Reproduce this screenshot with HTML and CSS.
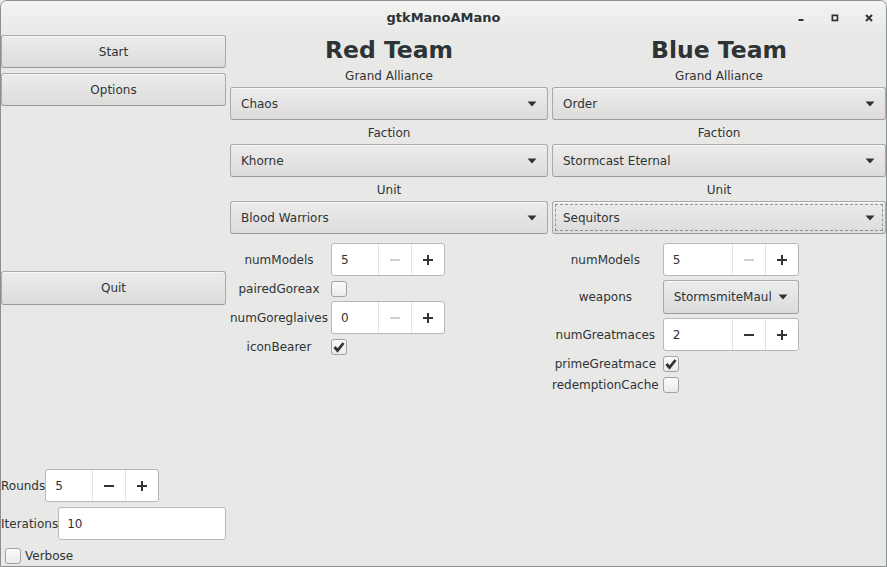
FILE: index.html
```html
<!DOCTYPE html>
<html>
<head>
<meta charset="utf-8">
<link rel="stylesheet" href="styles.css">
</head>
<body>
<div class="window">
  <header class="titlebar">
    <div></div>
    <span class="title">gtkManoAMano</span>
    <div class="controls">
      <span class="ctl"><svg width="8" height="8" viewBox="0 0 8 8"><rect x="1.5" y="5" width="5" height="2" fill="#2e3436"/></svg></span>
      <span class="ctl"><svg width="8" height="8" viewBox="0 0 8 8"><rect x="1" y="1" width="6" height="6" fill="none" stroke="#2e3436" stroke-width="2" transform="translate(0.5 0.5) scale(0.85)"/></svg></span>
      <span class="ctl"><svg width="8" height="8" viewBox="0 0 8 8"><path d="M1 1L7 7M7 1L1 7" stroke="#2e3436" stroke-width="2"/></svg></span>
    </div>
  </header>
  <main class="content">
    <aside class="sidebar">
      <button class="btn">Start</button>
      <button class="btn gap">Options</button>
      <div class="spacer"></div>
      <button class="btn quit">Quit</button>
      <div class="spacer"></div>
      <div class="inline-row">
        <span>Rounds</span>
        <div class="spin">
          <span class="spin-entry">5</span>
          <span class="spin-btn"><svg width="12" height="12" viewBox="0 0 12 12"><path d="M1 6H11" stroke="#2e3436" stroke-width="2"/></svg></span>
          <span class="spin-btn"><svg width="12" height="12" viewBox="0 0 12 12"><path d="M1 6H11M6 1V11" stroke="#2e3436" stroke-width="2"/></svg></span>
        </div>
      </div>
      <div class="inline-row gap">
        <span>Iterations</span>
        <div class="entry">10</div>
      </div>
      <label class="check-row">
        <span class="check"></span><span>Verbose</span>
      </label>
    </aside>

    <section class="team">
      <h1 class="team-title">Red Team</h1>
      <div class="field-label">Grand Alliance</div>
      <div class="combo"><span>Chaos</span><svg class="arrow" width="10" height="6" viewBox="0 0 10 6"><path d="M0.5 0.5H9.5L5 5.5Z" fill="#2e3436"/></svg></div>
      <div class="field-label">Faction</div>
      <div class="combo"><span>Khorne</span><svg class="arrow" width="10" height="6" viewBox="0 0 10 6"><path d="M0.5 0.5H9.5L5 5.5Z" fill="#2e3436"/></svg></div>
      <div class="field-label">Unit</div>
      <div class="combo"><span>Blood Warriors</span><svg class="arrow" width="10" height="6" viewBox="0 0 10 6"><path d="M0.5 0.5H9.5L5 5.5Z" fill="#2e3436"/></svg></div>

      <div class="params">
        <span class="plabel">numModels</span>
        <div class="spin">
          <span class="spin-entry">5</span>
          <span class="spin-btn"><svg width="12" height="12" viewBox="0 0 12 12"><path d="M1 6H11" stroke="#cfd1d1" stroke-width="2"/></svg></span>
          <span class="spin-btn"><svg width="12" height="12" viewBox="0 0 12 12"><path d="M1 6H11M6 1V11" stroke="#2e3436" stroke-width="2"/></svg></span>
        </div>
        <span class="plabel">pairedGoreax</span>
        <span class="check"></span>
        <span class="plabel">numGoreglaives</span>
        <div class="spin">
          <span class="spin-entry">0</span>
          <span class="spin-btn"><svg width="12" height="12" viewBox="0 0 12 12"><path d="M1 6H11" stroke="#cfd1d1" stroke-width="2"/></svg></span>
          <span class="spin-btn"><svg width="12" height="12" viewBox="0 0 12 12"><path d="M1 6H11M6 1V11" stroke="#2e3436" stroke-width="2"/></svg></span>
        </div>
        <span class="plabel">iconBearer</span>
        <span class="check"><svg width="14" height="14" viewBox="0 0 14 14"><path d="M2.5 7L5.5 10.5L11.5 3" fill="none" stroke="#2e3436" stroke-width="2.8"/></svg></span>
      </div>
    </section>

    <section class="team">
      <h1 class="team-title">Blue Team</h1>
      <div class="field-label">Grand Alliance</div>
      <div class="combo"><span>Order</span><svg class="arrow" width="10" height="6" viewBox="0 0 10 6"><path d="M0.5 0.5H9.5L5 5.5Z" fill="#2e3436"/></svg></div>
      <div class="field-label">Faction</div>
      <div class="combo"><span>Stormcast Eternal</span><svg class="arrow" width="10" height="6" viewBox="0 0 10 6"><path d="M0.5 0.5H9.5L5 5.5Z" fill="#2e3436"/></svg></div>
      <div class="field-label">Unit</div>
      <div class="combo focused"><span>Sequitors</span><svg class="arrow" width="10" height="6" viewBox="0 0 10 6"><path d="M0.5 0.5H9.5L5 5.5Z" fill="#2e3436"/></svg></div>

      <div class="params wide">
        <span class="plabel">numModels</span>
        <div class="spin">
          <span class="spin-entry">5</span>
          <span class="spin-btn"><svg width="12" height="12" viewBox="0 0 12 12"><path d="M1 6H11" stroke="#cfd1d1" stroke-width="2"/></svg></span>
          <span class="spin-btn"><svg width="12" height="12" viewBox="0 0 12 12"><path d="M1 6H11M6 1V11" stroke="#2e3436" stroke-width="2"/></svg></span>
        </div>
        <span class="plabel">weapons</span>
        <div class="combo small"><span>StormsmiteMaul</span><svg class="arrow" width="10" height="6" viewBox="0 0 10 6"><path d="M0.5 0.5H9.5L5 5.5Z" fill="#2e3436"/></svg></div>
        <span class="plabel">numGreatmaces</span>
        <div class="spin">
          <span class="spin-entry">2</span>
          <span class="spin-btn"><svg width="12" height="12" viewBox="0 0 12 12"><path d="M1 6H11" stroke="#2e3436" stroke-width="2"/></svg></span>
          <span class="spin-btn"><svg width="12" height="12" viewBox="0 0 12 12"><path d="M1 6H11M6 1V11" stroke="#2e3436" stroke-width="2"/></svg></span>
        </div>
        <span class="plabel">primeGreatmace</span>
        <span class="check"><svg width="14" height="14" viewBox="0 0 14 14"><path d="M2.5 7L5.5 10.5L11.5 3" fill="none" stroke="#2e3436" stroke-width="2.8"/></svg></span>
        <span class="plabel">redemptionCache</span>
        <span class="check"></span>
      </div>
    </section>
  </main>
</div>
</body>
</html>
```
FILE: styles.css
```css
* { box-sizing: border-box; }

body {
  margin: 0;
  font-family: "DejaVu Sans", sans-serif;
  font-size: 12px;
  color: #2e3436;
  background: #e8e8e7;
}

.window {
  width: 887px;
  height: 567px;
  border: 1px solid #8c8f90;
  border-radius: 7px 7px 0 0;
  overflow: hidden;
  background: #e8e8e7;
  display: flex;
  flex-direction: column;
}

.titlebar {
  height: 33px;
  flex: none;
  display: grid;
  grid-template-columns: 1fr auto 1fr;
  align-items: center;
  background: linear-gradient(to bottom, #f3f3f2, #e9e9e8);
}

.title {
  font-weight: bold;
  font-size: 13px;
  color: #2e3436;
}

.controls {
  display: flex;
  justify-content: flex-end;
}

.ctl {
  width: 34px;
  height: 33px;
  display: flex;
  align-items: center;
  justify-content: center;
}

.content {
  flex: 1;
  display: grid;
  grid-template-columns: 225px 318px 1fr;
  column-gap: 4px;
  padding-top: 1px;
  min-height: 0;
}

.sidebar {
  display: flex;
  flex-direction: column;
  padding-bottom: 1px;
}

.spacer { flex: 1; }

.gap { margin-top: 5px; }

.btn, .combo {
  font: inherit;
  color: #2e3436;
  height: 33px;
  flex: none;
  border: 1px solid #a9a9a7;
  border-bottom-color: #9a9a98;
  border-radius: 3px;
  background: linear-gradient(to bottom, #edecec, #dddcdb);
  box-shadow: inset 0 1px rgba(255,255,255,0.7);
  padding: 0;
}

.btn.quit { height: 34px; }

.inline-row {
  display: flex;
  align-items: center;
  height: 33px;
}

.entry {
  flex: 1;
  height: 33px;
  background: #fff;
  border: 1px solid #b8b9b6;
  border-radius: 3px;
  display: flex;
  align-items: center;
  padding-left: 8px;
}

.check-row {
  display: flex;
  align-items: center;
  gap: 4px;
  height: 18px;
  padding-left: 4px;
  margin-top: 7px;
}

.check {
  width: 16px;
  height: 16px;
  border: 1px solid #a2a3a1;
  border-radius: 3px;
  background: linear-gradient(to bottom, #fbfbfb, #ebebea);
  display: flex;
  align-items: center;
  justify-content: center;
  justify-self: start;
  align-self: center;
}

.spin {
  display: flex;
  height: 33px;
  min-width: 113px;
  background: #fff;
  border: 1px solid #b8b9b6;
  border-radius: 3px;
  flex: none;
}

.spin-entry {
  flex: 1;
  display: flex;
  align-items: center;
  padding-left: 9px;
  min-width: 46px;
}

.spin-btn {
  width: 33px;
  border-left: 1px solid #e3e3e2;
  display: flex;
  align-items: center;
  justify-content: center;
}

.team {
  display: flex;
  flex-direction: column;
  min-width: 0;
}

.team-title {
  margin: 0;
  height: 28px;
  padding-top: 1px;
  font-size: 23.5px;
  font-weight: bold;
  text-align: center;
  line-height: 28px;
}

.field-label {
  height: 24px;
  padding-top: 1px;
  line-height: 24px;
  text-align: center;
}

.combo {
  display: flex;
  align-items: center;
  justify-content: space-between;
  padding: 0 10px 0 10px;
}

.combo.small {
  height: 34px;
  gap: 6px;
  justify-content: flex-start;
  padding-right: 10px;
}

.combo.focused {
  outline: 1px dashed rgba(46, 52, 54, 0.45);
  outline-offset: -4px;
}

.arrow { flex: none; }

.params {
  margin-top: 9px;
  display: grid;
  grid-template-columns: auto auto;
  justify-content: start;
  column-gap: 3px;
  row-gap: 4px;
  grid-auto-rows: minmax(17px, auto);
}

.params.wide { column-gap: 4px; }

.plabel {
  text-align: center;
  align-self: center;
}
```
